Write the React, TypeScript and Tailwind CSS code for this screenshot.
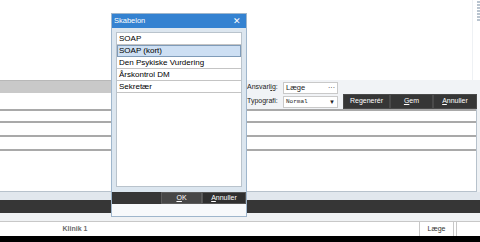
import React from 'react';

const items = ['SOAP', 'SOAP (kort)', 'Den Psykiske Vurdering', 'Årskontrol DM', 'Sekretær'];

function Dialog() {
  return (
    <div className="absolute left-[111px] top-[13px] w-[136px] h-[204px] border border-[#9fb6cc] bg-[#dce6ef] flex flex-col">
      {/* titel */}
      <div className="h-[14px] bg-[#3482d1] flex items-center justify-between px-[2px] text-white text-[7.5px]">
        <span>Skabelon</span>
        <span className="text-[9px] leading-none pr-[3px]">✕</span>
      </div>
      {/* liste */}
      <div className="flex-1 px-[4px] pt-[4px] pb-[5px]">
        <div className="h-full bg-white border border-[#b9c3cc] flex flex-col">
          {items.map((it, i) => (
            <div
              key={it}
              className={
                i === 1
                  ? 'h-[12px] flex items-center px-[1px] text-[8px] text-black bg-[#cddff3] border border-[#7f9bb8]'
                  : 'h-[12px] flex items-center px-[2px] text-[8px] text-black border-b border-[#c4c4c4]'
              }
            >
              {it}
            </div>
          ))}
        </div>
      </div>
      {/* knapper */}
      <div className="h-[12px] bg-[#363636] flex justify-end text-[7px] text-white">
        <div className="w-[41px] bg-[#474747] border border-[#5c5c5c] flex items-center justify-center">
          <span className="underline">O</span>K
        </div>
        <div className="w-[44px] bg-[#2f2f2f] border border-[#555] flex items-center justify-center">
          <span className="underline">A</span>nnuller
        </div>
      </div>
      <div className="h-[12px] bg-[#f7f9fb]"></div>
    </div>
  );
}

export default function App() {
  return (
    <div
      className="relative w-[480px] h-[242px] overflow-hidden bg-white flex flex-col"
      style={{ fontFamily: '"Liberation Sans", Arial, sans-serif' }}
    >
      {/* top */}
      <div className="h-[80px] flex">
        <div className="flex-1"></div>
        <div className="w-[8px] border-l border-[#eef1f4] flex flex-col items-end pt-[1px] gap-[1px]">
          {[0, 1, 2, 3, 4, 5, 6].map((i) => (
            <div key={i} className="w-[3px] h-[2px] bg-[#b9c4cf]"></div>
          ))}
        </div>
      </div>

      {/* værktøjslinje */}
      <div className="h-[29px] flex">
        <div className="w-[245px] flex flex-col">
          <div className="h-[13px] bg-[#c9c9c9] border-t border-[#b8b8b8]"></div>
          <div className="flex-1"></div>
        </div>
        <div className="flex-1 bg-[#f1f3f6] border-l border-[#c9d3dc] flex flex-col text-[7px] text-[#222]">
          <div className="h-[14px] flex items-center pt-[1px]">
            <span className="w-[37px] pl-[1px]">
              Ansvarl<span className="underline">i</span>g:
            </span>
            <div className="w-[55px] h-[12px] bg-white border border-[#c9c9c9] flex items-center justify-between px-[2px] text-[7.5px]">
              <span>Læge</span>
              <span className="text-[7px] leading-none">···</span>
            </div>
          </div>
          <div className="h-[15px] flex items-center">
            <span className="w-[37px] pl-[1px]">Typografi:</span>
            <div className="w-[55px] h-[12px] bg-white border border-[#c9c9c9] flex items-center justify-between px-[2px]">
              <span className="text-[6px]" style={{ fontFamily: '"Liberation Mono", monospace' }}>Normal</span>
              <span className="text-[6px] leading-none">▼</span>
            </div>
            <div className="ml-[5px] h-[15px] flex text-white text-[7px]">
              <div className="w-[47px] bg-[#363636] border border-[#4a4a4a] flex items-center justify-center">Regenerér</div>
              <div className="w-[43px] bg-[#363636] border border-[#4a4a4a] flex items-center justify-center">
                <span className="underline">G</span>em
              </div>
              <div className="w-[44px] bg-[#363636] border border-[#4a4a4a] flex items-center justify-center">
                <span className="underline">A</span>nnuller
              </div>
            </div>
          </div>
        </div>
      </div>

      {/* felter */}
      <div className="h-[83px] flex">
        <div className="w-[477px] border-r border-b border-[#b7c2cc] flex flex-col">
          <div className="h-[14px] border-t-2 border-b-2 border-[#a9a9a9]"></div>
          <div className="h-[14px] border-b-2 border-[#a9a9a9]"></div>
          <div className="h-[14px] border-b-2 border-[#a9a9a9]"></div>
          <div className="flex-1"></div>
        </div>
        <div className="flex-1 bg-[#eef1f4]"></div>
      </div>

      <div className="h-[8px] bg-[#e1e7ed]"></div>
      <div className="h-[13px] bg-[#363636]"></div>
      <div className="h-[9px] bg-[#f0f2f4] border-b border-[#c8c8c8]"></div>

      {/* statuslinje */}
      <div className="h-[14px] flex items-stretch text-[7px]">
        <div className="w-[150px] flex items-center justify-center font-bold text-[#6b6b6b]">Klinik 1</div>
        <div className="flex-1"></div>
        <div className="w-[35px] border-x border-[#c8c8c8] flex items-center justify-center text-[#333]">Læge</div>
        <div className="w-[2px]"></div>
        <div className="w-[24px] border-l border-[#c8c8c8]"></div>
      </div>
      <div className="flex-1 bg-black"></div>

      <Dialog />
    </div>
  );
}
